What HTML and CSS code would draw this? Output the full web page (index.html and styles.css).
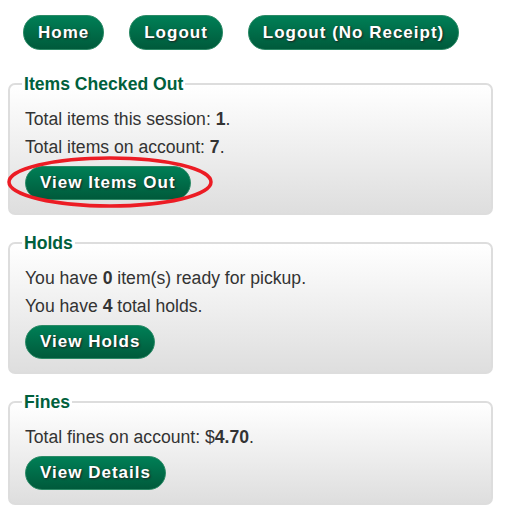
FILE: index.html
```html
<!DOCTYPE html>
<html>
<head>
<meta charset="utf-8">
<link rel="stylesheet" href="styles.css">
</head>
<body>
<nav class="topnav">
  <a class="btn" href="#">Home</a>
  <a class="btn" href="#">Logout</a>
  <a class="btn" href="#">Logout (No Receipt)</a>
</nav>

<fieldset class="panel">
  <legend>Items Checked Out</legend>
  <p>Total items this session: <b>1</b>.</p>
  <p>Total items on account: <b>7</b>.</p>
  <div class="action">
    <span class="marked">
      <a class="btn" href="#">View Items Out</a>
      <svg class="circle" width="214" height="58" viewBox="0 0 214 58"><ellipse cx="103" cy="28" rx="101" ry="24" fill="none" stroke="#ec1c24" stroke-width="3.5"/></svg>
    </span>
  </div>
</fieldset>

<fieldset class="panel">
  <legend>Holds</legend>
  <p>You have <b>0</b> item(s) ready for pickup.</p>
  <p>You have <b>4</b> total holds.</p>
  <div class="action"><a class="btn" href="#">View Holds</a></div>
</fieldset>

<fieldset class="panel">
  <legend>Fines</legend>
  <p>Total fines on account: $<b>4.70</b>.</p>
  <div class="action"><a class="btn" href="#">View Details</a></div>
</fieldset>
</body>
</html>
```
FILE: styles.css
```css
html, body { margin: 0; padding: 0; background: #fff; }
body {
  padding: 15px 16px 0 8px;
  font-family: "Liberation Sans", Arial, sans-serif;
  font-size: 17.6px;
  color: #333;
}
.topnav {
  display: flex;
  gap: 25px;
  padding-left: 15px;
  margin-bottom: 24px;
}
.btn {
  display: inline-block;
  box-sizing: border-box;
  height: 35px;
  line-height: 33px;
  padding: 0 14px;
  border: 1px solid #2c8a66;
  border-radius: 17px;
  background: linear-gradient(#007f56, #005a3b);
  color: #fff;
  font-weight: bold;
  font-size: 17px;
  letter-spacing: 1px;
  text-decoration: none;
  text-shadow: 1px 1px 2px #222;
  white-space: nowrap;
}
.panel .btn { height: 34px; line-height: 32px; }
.panel {
  margin: 0 0 18px 0;
  padding: 4px 15px 13px;
  border: 2px solid #ddd;
  border-radius: 7px;
  background: linear-gradient(#fff, #dedede);
}
.panel legend {
  padding: 0 2px;
  margin-left: -3px;
  color: #00603c;
  font-weight: bold;
  font-size: 17.6px;
  line-height: 20px;
}
.panel p { margin: 0 0 8px; line-height: 20px; }
.panel p:first-of-type { margin-top: 11px; }
.action { padding-top: 1px; display: flex; }
.marked { position: relative; display: inline-block; }
.marked .btn { display: block; }
.circle {
  position: absolute;
  left: -18px;
  top: -12px;
  pointer-events: none;
}
```
